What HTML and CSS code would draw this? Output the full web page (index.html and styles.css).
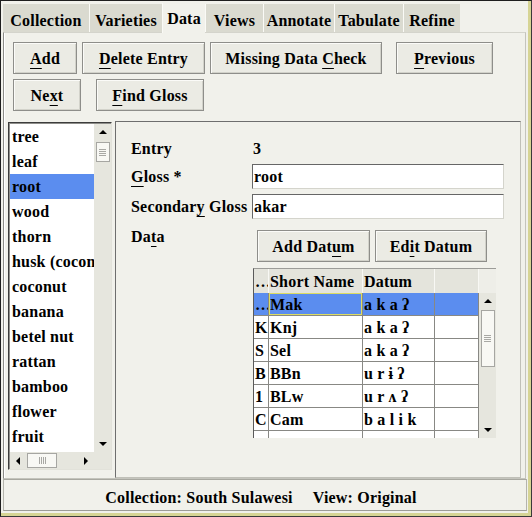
FILE: index.html
```html
<!DOCTYPE html>
<html>
<head>
<meta charset="utf-8">
<link rel="stylesheet" href="styles.css">
</head>
<body>
<div class="window">
  <div class="frame">
    <div class="tabs">
      <div class="tab first t-coll">Collection</div>
      <div class="tab t-var">Varieties</div>
      <div class="tab active t-data">Data</div>
      <div class="tab t-views">Views</div>
      <div class="tab t-ann">Annotate</div>
      <div class="tab t-tab">Tabulate</div>
      <div class="tab t-ref">Refine</div>
    </div>
    <div class="panel">
      <div class="btnrow">
        <button class="btn w-add"><span class="bl"><span class="mn">A</span>dd</span></button>
        <button class="btn w-del g5"><span class="bl"><span class="mn">D</span>elete Entry</span></button>
        <button class="btn w-miss g5"><span class="bl">Missing Data <span class="mn">C</span>heck</span></button>
        <button class="btn w-prev g14"><span class="bl"><span class="mn">P</span>revious</span></button>
      </div>
      <div class="btnrow">
        <button class="btn w-next"><span class="bl">Ne<span class="mn">x</span>t</span></button>
        <button class="btn w-find g15"><span class="bl"><span class="mn">F</span>ind Gloss</span></button>
      </div>
      <div class="split">
        <div class="listpane">
          <div class="listtop">
            <div class="list">
              <div class="item">tree</div>
              <div class="item">leaf</div>
              <div class="item sel">root</div>
              <div class="item">wood</div>
              <div class="item">thorn</div>
              <div class="item">husk (coconut)</div>
              <div class="item">coconut</div>
              <div class="item">banana</div>
              <div class="item">betel nut</div>
              <div class="item">rattan</div>
              <div class="item">bamboo</div>
              <div class="item">flower</div>
              <div class="item">fruit</div>
            </div>
            <div class="vscroll lv">
              <div class="arrbox up"><span class="arr-up"></span></div>
              <div class="thumb lthumb"><span class="grip-h"></span></div>
              <div class="vspace"></div>
              <div class="arrbox down"><span class="arr-down"></span></div>
            </div>
          </div>
          <div class="listbottom">
            <div class="hscroll">
              <div class="harr"><span class="arr-left"></span></div>
              <div class="thumb hthumb"><span class="grip-v"></span></div>
              <div class="hspace"></div>
              <div class="harr"><span class="arr-right"></span></div>
            </div>
            <div class="corner"></div>
          </div>
        </div>
        <div class="detail">
          <div class="frow r-entry">
            <div class="flabel">Entry</div>
            <div class="fvalue">3</div>
          </div>
          <div class="frow r-in g-in1">
            <div class="flabel"><span class="mn">G</span>loss *</div>
            <div class="input">root</div>
          </div>
          <div class="frow r-in g-in2">
            <div class="flabel">Secondar<span class="mn">y</span> Gloss</div>
            <div class="input">akar</div>
          </div>
          <div class="frow r-data">
            <div class="flabel dlabel">Da<span class="mn">t</span>a</div>
            <button class="btn w-add-d g-first"><span class="bl">Add Dat<span class="mn">u</span>m</span></button>
            <button class="btn w-edit-d g5"><span class="bl">Ed<span class="mn">i</span>t Datum</span></button>
          </div>
          <div class="table">
            <div class="thead">
              <div class="th c0">…</div>
              <div class="th c1">Short Name</div>
              <div class="th c2">Datum</div>
              <div class="th c3"></div>
            </div>
            <div class="tcorner"></div>
            <div class="tbody">
              <div class="tr tsel">
                <div class="td c0">…</div>
                <div class="td c1 focus">Mak</div>
                <div class="td c2">a k a ʔ</div>
                <div class="td c3"></div>
              </div>
              <div class="tr">
                <div class="td c0">K</div>
                <div class="td c1">Knj</div>
                <div class="td c2">a k a ʔ</div>
                <div class="td c3"></div>
              </div>
              <div class="tr">
                <div class="td c0">S</div>
                <div class="td c1">Sel</div>
                <div class="td c2">a k a ʔ</div>
                <div class="td c3"></div>
              </div>
              <div class="tr">
                <div class="td c0">B</div>
                <div class="td c1">BBn</div>
                <div class="td c2">u r ɨ ʔ</div>
                <div class="td c3"></div>
              </div>
              <div class="tr">
                <div class="td c0">1</div>
                <div class="td c1">BLw</div>
                <div class="td c2">u r ʌ ʔ</div>
                <div class="td c3"></div>
              </div>
              <div class="tr">
                <div class="td c0">C</div>
                <div class="td c1">Cam</div>
                <div class="td c2">b a l i k</div>
                <div class="td c3"></div>
              </div>
              <div class="tr">
                <div class="td c0"></div>
                <div class="td c1"></div>
                <div class="td c2"></div>
                <div class="td c3"></div>
              </div>
            </div>
            <div class="vscroll tv">
              <div class="arrbox tup"><span class="arr-up"></span></div>
              <div class="thumb tthumb"><span class="grip-h"></span></div>
              <div class="vspace"></div>
              <div class="arrbox tdown"><span class="arr-down"></span></div>
            </div>
          </div>
        </div>
      </div>
    </div>
    <div class="status">
      <span>Collection: South Sulawesi</span>
      <span>View: Original</span>
    </div>
  </div>
</div>
</body>
</html>
```

FILE: styles.css
```css
* { box-sizing: border-box; }
html, body { margin: 0; padding: 0; }
body {
  background: #f1f1eb;
  font-family: "Liberation Serif", "DejaVu Serif", serif;
  font-weight: bold;
  font-size: 16px;
  letter-spacing: 0.2px;
  color: #000;
}
.window {
  width: 532px;
  height: 517px;
  border-top: 1px solid #1e1e1e;
  border-left: 1px solid #1e1e1e;
  border-right: 1px solid #3a3a3a;
  border-bottom: 1px solid #3a3a3a;
  background: #f1f1eb;
  overflow: hidden;
}
.frame {
  height: 100%;
  border-right: 3px solid #d6d494;
  border-bottom: 3px solid #d6d494;
  display: flex;
  flex-direction: column;
}

/* tabs */
.tabs {
  display: flex;
  align-items: flex-end;
  height: 31px;
  margin-left: 2px;
  flex: none;
}
.tab {
  height: 28px;
  padding: 6px 0 0 0;
  display: flex;
  align-items: center;
  justify-content: center;
  background: #dadad0;
  border-left: 1px solid #fafaf6;
  white-space: nowrap;
  flex: none;
}
.tab.first { border-left: none; }
.tab.active {
  height: 30px;
  margin-bottom: -1px;
  padding-top: 2px;
  background: #f1f1eb;
  position: relative;
}
.t-coll { width: 86px; }
.t-var { width: 73px; }
.t-data { width: 43px; }
.t-views { width: 58px; }
.t-ann { width: 71px; }
.t-tab { width: 69px; }
.t-ref { width: 57px; }

/* main panel */
.panel {
  flex: none;
  margin-left: 2px;
  width: 523px;
  height: 447px;
  border: 1px solid;
  border-color: #d4d4cc #c4c4bc #c4c4bc #8c8c88;
  box-shadow: inset 1px 0 #ffffff;
  padding: 9px 0 0 9px;
}
.btnrow { display: flex; height: 32px; }
.btnrow + .btnrow { margin-top: 5px; }
.btn {
  height: 32px;
  font: inherit;
  letter-spacing: inherit;
  color: #000;
  background: #ebebe4;
  border: 1px solid #8e8e8a;
  box-shadow: inset 1px 1px #fbfbf8, inset -1px -1px #d2d2ca;
  padding: 2px 0 0 0;
  margin: 0;
  display: flex;
  align-items: center;
  justify-content: center;
  white-space: nowrap;
  flex: none;
}
.bl { white-space: pre; }
.mn { text-decoration: underline; text-underline-offset: 4px; text-decoration-thickness: 1px; }
.w-add { width: 64px; }
.w-del { width: 123px; }
.w-miss { width: 172px; }
.w-prev { width: 97px; }
.w-next { width: 68px; }
.w-find { width: 108px; }
.w-add-d { width: 113px; }
.w-edit-d { width: 112px; }
.g5 { margin-left: 5px; }
.g14 { margin-left: 14px; }
.g15 { margin-left: 15px; }

/* split area */
.split {
  display: flex;
  margin-top: 10px;
  margin-left: -5px;
  height: 357px;
}
.listpane {
  width: 104px;
  height: 348px;
  margin-top: 1px;
  border: 1px solid;
  border-color: #3c3c3c #e2e2da #e2e2da #3c3c3c;
  padding: 1px 0 0 1px;
  background: #8e8e8a;
  display: flex;
  flex-direction: column;
  flex: none;
}
.listtop { display: flex; height: 328px; }
.list {
  width: 84px;
  height: 328px;
  background: #ffffff;
  overflow: hidden;
}
.item {
  height: 25px;
  line-height: 25px;
  padding-left: 2px;
  white-space: nowrap;
  overflow: hidden;
}
.item.sel { background: #5b8def; }

.vscroll {
  background: #e6e6de;
  display: flex;
  flex-direction: column;
  align-items: center;
}
.lv { width: 17px; height: 328px; }
.arrbox {
  width: 100%;
  display: flex;
  align-items: center;
  justify-content: center;
  flex: none;
}
.up { height: 15px; }
.down { height: 16px; }
.vspace { flex: 1; }
.arr-up {
  width: 0; height: 0;
  border-left: 4px solid transparent;
  border-right: 4px solid transparent;
  border-bottom: 4px solid #000;
}
.arr-down {
  width: 0; height: 0;
  border-left: 4px solid transparent;
  border-right: 4px solid transparent;
  border-top: 4px solid #000;
}
.arr-left {
  width: 0; height: 0;
  border-top: 4px solid transparent;
  border-bottom: 4px solid transparent;
  border-right: 4px solid #000;
}
.arr-right {
  width: 0; height: 0;
  border-top: 4px solid transparent;
  border-bottom: 4px solid transparent;
  border-left: 4px solid #000;
}
.thumb {
  background: #f8f8f4;
  border: 1px solid #a6a6a2;
  display: flex;
  align-items: center;
  justify-content: center;
  flex: none;
}
.lthumb { width: 14px; height: 20px; margin-top: 3px; }
.grip-h {
  width: 7px;
  height: 7px;
  background: repeating-linear-gradient(to bottom, #a8a8a4 0 1px, transparent 1px 2px);
}
.grip-v {
  width: 7px;
  height: 7px;
  background: repeating-linear-gradient(to right, #a8a8a4 0 1px, transparent 1px 2px);
}
.listbottom { display: flex; height: 17px; }
.hscroll {
  width: 84px;
  height: 17px;
  background: #e6e6de;
  display: flex;
  align-items: center;
}
.harr {
  width: 16px;
  height: 17px;
  display: flex;
  align-items: center;
  justify-content: center;
  flex: none;
}
.hthumb { width: 30px; height: 15px; margin-left: 1px; }
.hspace { flex: 1; }
.corner { width: 17px; height: 17px; background: #e6e6de; }

/* detail */
.detail {
  width: 406px;
  height: 357px;
  margin-left: 3px;
  border: 1px solid;
  border-color: #6e6e6e #c0c0b8 #c0c0b8 #6e6e6e;
  padding: 17px 0 0 15px;
  flex: none;
}
.frow { display: flex; align-items: center; }
.flabel { width: 121px; flex: none; white-space: nowrap; }
.r-entry { height: 20px; }
.r-in { height: 25px; }
.g-in1 { margin-top: 5px; }
.g-in2 { margin-top: 5px; }
.r-data { height: 32px; margin-top: 11px; align-items: flex-start; }
.dlabel { margin-top: -2px; }
.g-first { margin-left: 5px; }
.fvalue { padding-left: 1px; }
.input {
  width: 252px;
  height: 25px;
  background: #ffffff;
  border: 1px solid;
  border-color: #666666 #d4d4cc #d4d4cc #666666;
  padding: 1px 0 0 1px;
  display: flex;
  align-items: center;
  white-space: nowrap;
}

/* table */
.table {
  margin-top: 6px;
  margin-left: 122px;
  width: 243px;
  height: 170px;
  border-top: 1px solid #9c9c98;
  border-left: 1px solid #5a5a5a;
  display: grid;
  grid-template-columns: 225px 17px;
  grid-template-rows: 24px 145px;
}
.thead { display: flex; background: #e4e4dc; }
.th {
  height: 24px;
  border-right: 1px solid #f8f8f4;
  padding: 1px 0 0 1px;
  display: flex;
  align-items: center;
  white-space: nowrap;
  overflow: hidden;
}
.tcorner { background: #eeeee8; }
.c0 { width: 15px; }
.c1 { width: 94px; }
.c2 { width: 72px; }
.c3 { width: 44px; }
.tbody {
  height: 145px;
  overflow: hidden;
  background: #ffffff;
}
.tr { display: flex; height: 23px; }
.td {
  height: 23px;
  border-right: 1px solid #888884;
  border-bottom: 1px solid #888884;
  padding: 1px 0 0 1px;
  display: flex;
  align-items: center;
  white-space: nowrap;
  overflow: hidden;
}
.tsel .td { background: #5b8def; }
.focus { box-shadow: inset 0 0 0 1px #dcdc62; }
.tv { width: 17px; height: 145px; }
.tup { height: 16px; }
.tdown { height: 17px; }
.tthumb { width: 14px; height: 57px; margin-top: 1px; }

/* status bar */
.status {
  flex: none;
  margin-left: 2px;
  width: 524px;
  height: 32px;
  border: 1px solid;
  border-color: #a8a8a0 #b4b4ac #9c9c96 #b4b4ac;
  display: flex;
  align-items: center;
  justify-content: center;
  gap: 20px;
  padding: 5px 8px 0 0;
}
```
